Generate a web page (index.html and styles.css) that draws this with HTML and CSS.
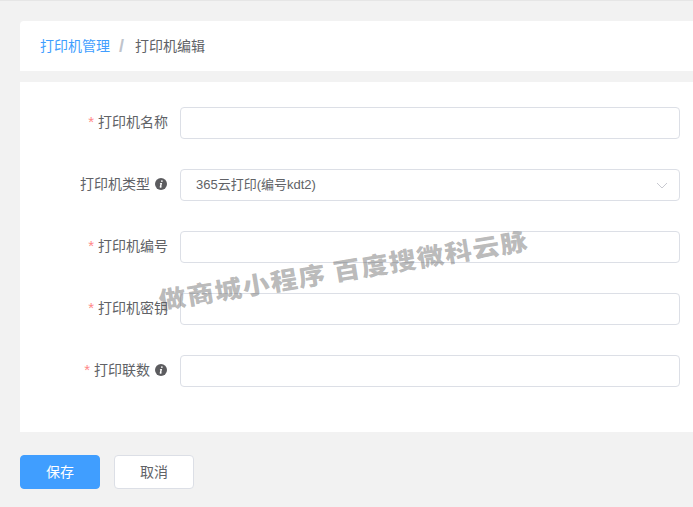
FILE: index.html
```html
<!DOCTYPE html>
<html lang="zh-CN">
<head>
<meta charset="utf-8">
<title>打印机编辑</title>
<link rel="stylesheet" href="styles.css">
</head>
<body>
<main class="page">
  <nav class="crumbs">
    <a class="crumb-link">打印机管理</a>
    <span class="crumb-sep">/</span>
    <span class="crumb-current">打印机编辑</span>
  </nav>
  <form class="card">
    <div class="row">
      <label class="label"><span class="req">*</span>打印机名称</label>
      <div class="field"></div>
    </div>
    <div class="row">
      <label class="label">打印机类型<svg class="info" viewBox="0 0 12 12"><circle cx="6" cy="6" r="6" fill="#5c5c5f"/><path d="M6.9 2.2a.85.85 0 1 1-.01 1.7.85.85 0 0 1 .01-1.7zM5 5.1h2.1L6.3 8.6c-.05.25.2.3.7-.1l.15.35c-.6.6-1.1.85-1.6.85-.65 0-.95-.35-.8-1L5.4 5.8l-.55-.1z" fill="#fff"/></svg></label>
      <div class="field select">
        <span>365云打印(编号kdt2)</span>
        <svg class="chevron" viewBox="0 0 12 7"><path d="M1 1l5 5 5-5" fill="none" stroke="#c8c9d0" stroke-width="1"/></svg>
      </div>
    </div>
    <div class="row">
      <label class="label"><span class="req">*</span>打印机编号</label>
      <div class="field"></div>
    </div>
    <div class="row">
      <label class="label"><span class="req">*</span>打印机密钥</label>
      <div class="field"></div>
    </div>
    <div class="row">
      <label class="label"><span class="req">*</span>打印联数<svg class="info" viewBox="0 0 12 12"><circle cx="6" cy="6" r="6" fill="#5c5c5f"/><path d="M6.9 2.2a.85.85 0 1 1-.01 1.7.85.85 0 0 1 .01-1.7zM5 5.1h2.1L6.3 8.6c-.05.25.2.3.7-.1l.15.35c-.6.6-1.1.85-1.6.85-.65 0-.95-.35-.8-1L5.4 5.8l-.55-.1z" fill="#fff"/></svg></label>
      <div class="field"></div>
    </div>
  </form>
  <div class="actions">
    <button class="btn primary" type="button">保存</button>
    <button class="btn" type="button">取消</button>
  </div>
</main>
<div class="watermark">做商城小程序 百度搜微科云脉</div>
</body>
</html>
```
FILE: styles.css
```css
* { box-sizing: border-box; }
html, body { margin: 0; height: 100%; }
body {
  background: #f2f2f2;
  border-top: 1px solid #e6e6e6;
  color: #606266;
  font: 14px/20px "Liberation Sans", "Noto Sans CJK SC", sans-serif;
  overflow: hidden;
  position: relative;
}
.page { padding: 20px 0 0 20px; width: 693px; }
.crumbs {
  align-items: center;
  background: #fff;
  border-radius: 4px 0 0 0;
  display: flex;
  height: 50px;
  padding: 0 0 1px 20px;
}
.crumb-link { color: #409eff; }
.crumb-sep { color: #c0c4cc; font-size: 18px; font-weight: 700; margin: 0 11px 0 9px; }
.crumb-current { color: #606266; }
.card {
  background: #fff;
  display: flex;
  flex-direction: column;
  gap: 30px;
  height: 350px;
  margin-top: 11px;
  padding: 25px 13px 0 0;
}
.row { align-items: center; display: flex; height: 32px; }
.label {
  align-items: center;
  display: flex;
  flex: 0 0 160px;
  justify-content: flex-end;
  padding: 0 12px 2px 0;
}
.req { color: #f88; font-size: 15px; margin-right: 4px; }
.info { height: 12px; margin: 0 1px 0 5px; width: 12px; }
.field {
  background: #fff;
  border: 1px solid #dcdfe6;
  border-radius: 4px;
  flex: 1;
  height: 32px;
}
.select {
  align-items: center;
  display: flex;
  font-size: 13px;
  justify-content: space-between;
  padding: 0 11px 0 15px;
}
.chevron { height: 7px; width: 12px; }
.actions { display: flex; gap: 14px; margin-top: 23px; }
.btn {
  background: #fff;
  border: 1px solid #dcdfe6;
  border-radius: 4px;
  color: #606266;
  font: inherit;
  height: 34px;
  padding: 0;
  width: 80px;
}
.primary { background: #409eff; border-color: #409eff; color: #fff; }
.watermark {
  color: rgba(100, 100, 100, .45);
  font: 900 27px/30px "Noto Sans CJK SC", sans-serif;
  left: 159px;
  letter-spacing: 1.2px;
  pointer-events: none;
  position: absolute;
  top: 284px;
  transform: rotate(-9.3deg) scaleY(.9);
  transform-origin: 0 50%;
  white-space: nowrap;
}
```
